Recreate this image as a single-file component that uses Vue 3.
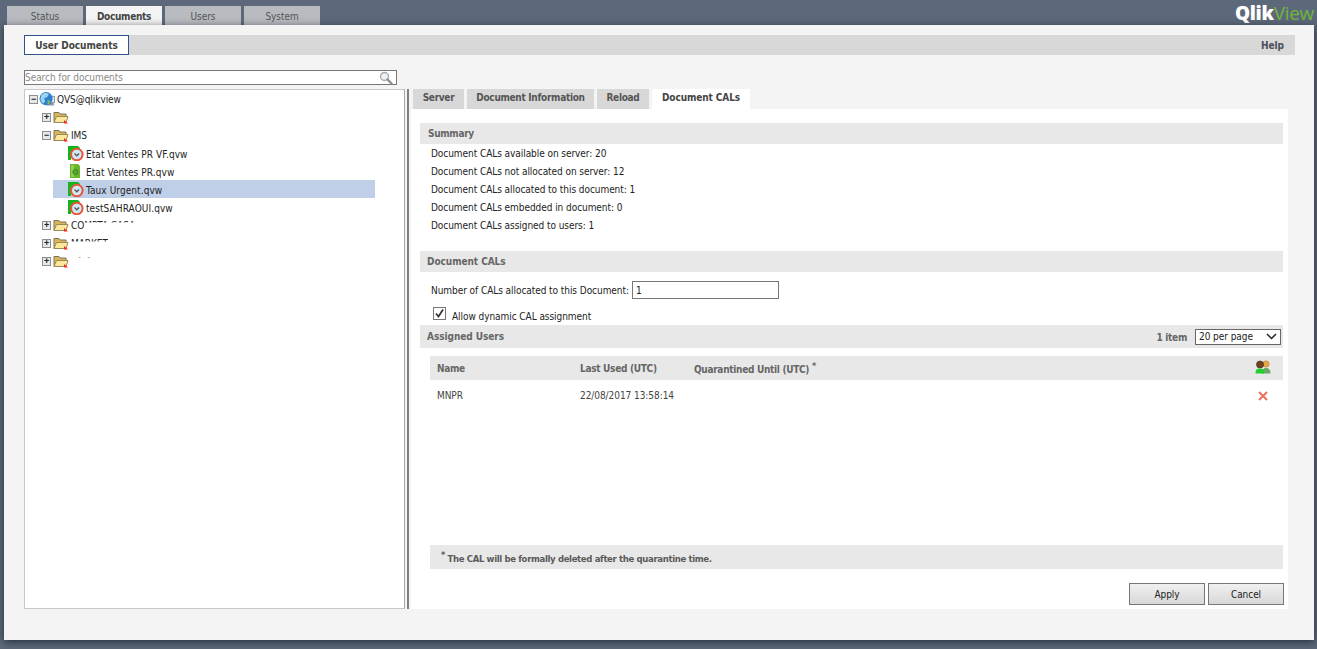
<script setup>
const topTabs = [
  { label: 'Status', active: false },
  { label: 'Documents', active: true },
  { label: 'Users', active: false },
  { label: 'System', active: false }
]
const subTabs = [
  { label: 'Server', w: 51, active: false },
  { label: 'Document Information', w: 127, active: false },
  { label: 'Reload', w: 52, active: false },
  { label: 'Document CALs', w: 98, active: true }
]
const summary = [
  'Document CALs available on server: 20',
  'Document CALs not allocated on server: 12',
  'Document CALs allocated to this document: 1',
  'Document CALs embedded in document: 0',
  'Document CALs assigned to users: 1'
]
const files = [
  { name: 'Etat Ventes PR VF.qvw', clock: true, sel: false },
  { name: 'Etat Ventes PR.qvw', clock: false, sel: false },
  { name: 'Taux Urgent.qvw', clock: true, sel: true },
  { name: 'testSAHRAOUI.qvw', clock: true, sel: false }
]
</script>

<template>
  <div class="page">
    <header class="top">
      <nav class="top-tabs">
        <div v-for="t in topTabs" :key="t.label" class="top-tab" :class="{ on: t.active }">{{ t.label }}</div>
      </nav>
      <div class="logo"><b>Qlik</b><span>View</span></div>
    </header>

    <main class="panel">
      <div class="bar">
        <div class="bar-tab">User Documents</div>
        <div class="help">Help</div>
      </div>

      <div class="search">
        <span>Search for documents</span>
        <svg width="16" height="14" viewBox="0 0 16 14">
          <circle cx="6.500" cy="5.500" r="4" fill="#eef1f3" stroke="#a9adb0" stroke-width="1.400"/>
          <path d="M9.500 8.500l4 4" stroke="#8b8e90" stroke-width="2.400" stroke-linecap="round"/>
        </svg>
      </div>

      <div class="cols">
        <section class="tree">
          <div class="row r0">
            <i class="box">−</i>
            <svg class="globe" width="16" height="17" viewBox="0 0 17 17">
              <path d="M8 11h7l1 4H8z" fill="#8f93a8"/>
              <rect x="9" y="5" width="7.500" height="7" fill="#dfe7f4" stroke="#6f7488" stroke-width=".8"/>
              <circle cx="7.500" cy="7.500" r="7" fill="#2f7fd0"/>
              <path d="M2.500 3.500c3-2.500 6-2.500 8-.5l-2 3-3 1 1 4-2.500 2-2.500-4z" fill="#9ad4ee"/>
              <path d="M9 9l3 1-1 3-2 1z" fill="#7cc25a"/>
            </svg>
            <span>QVS@qlikview</span>
          </div>
          <div class="row r1">
            <i class="box">+</i>
            <svg class="folder" width="16" height="13" viewBox="0 0 16 13"><path d="M1 1.500h5l1 1.500h6v8.500H1z" fill="#dcb45a" stroke="#7d7458"/><path d="M1 11.500l2.500-6H15l-2 6z" fill="#fde79a" stroke="#9a8a5a"/><path d="M11 9l4 3.500h-4z" fill="#ee2a1c"/></svg>
          </div>
          <div class="row r1">
            <i class="box">−</i>
            <svg class="folder" width="16" height="13" viewBox="0 0 16 13"><path d="M1 1.500h5l1 1.500h6v8.500H1z" fill="#dcb45a" stroke="#7d7458"/><path d="M1 11.500l2.500-6H15l-2 6z" fill="#fde79a" stroke="#9a8a5a"/><path d="M11 9l4 3.500h-4z" fill="#ee2a1c"/></svg>
            <span>IMS</span>
          </div>
          <div v-for="f in files" :key="f.name" class="row r2" :class="{ sel: f.sel }">
            <svg class="file" width="16" height="16" viewBox="0 0 16 16">
              <template v-if="f.clock">
                <path d="M0 1h10l2 2v3H3v9H0z" fill="#12b51e"/>
                <circle cx="8.800" cy="9.500" r="5.800" fill="#cfe9f5" stroke="#e8553a" stroke-width="2"/>
                <path d="M6.500 8.500l2.300 2.300 2.300-2.300" fill="none" stroke="#55555c" stroke-width="1.300"/>
              </template>
              <template v-else>
                <path d="M2 1h8l2 2v12H2z" fill="#6cb52f"/>
                <path d="M3 2h3v12H3z" fill="#8fd04a"/>
                <circle cx="7.500" cy="9" r="2.600" fill="#5aa232" stroke="#3f8a24"/>
              </template>
            </svg>
            <span class="fname">{{ f.name }}</span>
          </div>
          <div class="row r1">
            <i class="box">+</i>
            <svg class="folder" width="16" height="13" viewBox="0 0 16 13"><path d="M1 1.500h5l1 1.500h6v8.500H1z" fill="#dcb45a" stroke="#7d7458"/><path d="M1 11.500l2.500-6H15l-2 6z" fill="#fde79a" stroke="#9a8a5a"/><path d="M11 9l4 3.500h-4z" fill="#ee2a1c"/></svg>
            <span>CO<em class="m1">MPTA CASA</em></span>
          </div>
          <div class="row r1">
            <i class="box">+</i>
            <svg class="folder" width="16" height="13" viewBox="0 0 16 13"><path d="M1 1.500h5l1 1.500h6v8.500H1z" fill="#dcb45a" stroke="#7d7458"/><path d="M1 11.500l2.500-6H15l-2 6z" fill="#fde79a" stroke="#9a8a5a"/><path d="M11 9l4 3.500h-4z" fill="#ee2a1c"/></svg>
            <span class="m2">MARKET</span>
          </div>
          <div class="row r1">
            <i class="box">+</i>
            <svg class="folder" width="16" height="13" viewBox="0 0 16 13"><path d="M1 1.500h5l1 1.500h6v8.500H1z" fill="#dcb45a" stroke="#7d7458"/><path d="M1 11.500l2.500-6H15l-2 6z" fill="#fde79a" stroke="#9a8a5a"/><path d="M11 9l4 3.500h-4z" fill="#ee2a1c"/></svg>
            <span class="m3">&nbsp;&nbsp;A A</span>
          </div>
        </section>

        <div class="split"></div>

        <section class="right">
          <nav class="sub-tabs">
            <div v-for="t in subTabs" :key="t.label" class="sub-tab" :class="{ on: t.active }" :style="{ width: t.w + 'px' }">{{ t.label }}</div>
          </nav>
          <div class="content">
            <h3 class="sec summary-h">Summary</h3>
            <p v-for="s in summary" :key="s" class="line">{{ s }}</p>

            <h3 class="sec cals-h">Document CALs</h3>
            <div class="alloc">
              <label>Number of CALs allocated to this Document:</label>
              <div class="input">1</div>
            </div>
            <div class="dyn">
              <span class="check">
                <svg width="11" height="11" viewBox="0 0 11 11"><path d="M2 5.500l2.500 3L9 1.500" fill="none" stroke="#333" stroke-width="1.700"/></svg>
              </span>
              <span>Allow dynamic CAL assignment</span>
            </div>

            <div class="sec assigned">
              <span>Assigned Users</span>
              <div class="pager">
                <b>1 item</b>
                <div class="select">20 per page
                  <svg width="11" height="7" viewBox="0 0 11 7"><path d="M1 1l4.500 4.500L10 1" fill="none" stroke="#222" stroke-width="1.500"/></svg>
                </div>
              </div>
            </div>

            <div class="thead">
              <span class="c1">Name</span>
              <span class="c2">Last Used (UTC)</span>
              <span class="c3">Quarantined Until (UTC) <sup>*</sup></span>
              <svg class="users" width="16" height="15" viewBox="0 0 16 15">
                <circle cx="11" cy="4" r="3.200" fill="#e8a548" stroke="#a87a3a" stroke-width=".5"/>
                <path d="M7 13.500c0-4 1.500-5.500 4-5.500s4.500 1.500 4.500 5.500z" fill="#6aa867"/>
                <circle cx="5" cy="4.500" r="3.500" fill="#7a3e18" stroke="#333" stroke-width=".7"/>
                <path d="M.5 13.500c0-4 1.500-5 4.500-5s4 1 4 5z" fill="#1fd02e"/>
              </svg>
            </div>
            <div class="trow">
              <span class="c1">MNPR</span>
              <span class="c2">22/08/2017 13:58:14</span>
              <svg class="del" width="10" height="10" viewBox="0 0 10 10"><path d="M1 1l8 8M9 1L1 9" stroke="#f0705c" stroke-width="2"/></svg>
            </div>

            <div class="note"><sup>*</sup> The CAL will be formally deleted after the quarantine time.</div>

            <div class="actions">
              <button>Apply</button>
              <button>Cancel</button>
            </div>
          </div>
        </section>
      </div>
    </main>
  </div>
</template>

<style scoped>
.page {
  width: 1317px;
  height: 649px;
  overflow: hidden;
  background: #5d697a;
  font: 10px/13px "DejaVu Sans Condensed", "DejaVu Sans", sans-serif;
  font-stretch: condensed;
  letter-spacing: -.06px;
  color: #111;
  display: flex;
  flex-direction: column;
}
.top {
  height: 25px;
  flex: none;
  display: flex;
  justify-content: space-between;
  padding: 6px 3px 0 7px;
  box-sizing: border-box;
}
.top-tabs { display: flex; gap: 3px; }
.top-tab {
  width: 76px;
  height: 19px;
  background: #b8bcc1;
  color: #555;
  text-align: center;
  line-height: 21px;
}
.top-tab.on { background: #f4f4f4; color: #444; font-weight: 700; letter-spacing: -.3px; }
.logo {
  margin-top: -3px;
  height: 20px;
  font: 700 19px/20px "Open Sans", sans-serif;
  color: #fff;
  letter-spacing: -.3px;
}
.logo b { font-weight: 800; }
.logo span { color: #6fb63a; font-weight: 400; }
.panel {
  margin: 0 3px 0 4px;
  height: 615px;
  flex: none;
  background: #f4f4f4;
  box-shadow: 0 2px 8px rgba(20, 25, 35, .75);
  padding: 10px 0 0 20px;
  box-sizing: border-box;
}
.bar {
  width: 1271px;
  height: 20px;
  background: #d8d8d8;
  display: flex;
  justify-content: space-between;
  align-items: center;
}
.bar-tab {
  width: 103px;
  height: 18px;
  border: 1px solid #35508f;
  background: #fff;
  text-align: center;
  line-height: 20px;
  font-weight: 700;
  color: #444;
}
.help { font-weight: 700; color: #4a4f5a; padding-right: 11px; }
.search {
  margin-top: 15px;
  width: 373px;
  height: 15px;
  box-sizing: border-box;
  border: 1px solid #777;
  background: #fff;
  color: #8a8a8a;
  display: flex;
  justify-content: space-between;
  align-items: center;
  padding: 0 2px 0 0;
}
.cols {
  margin-top: 4px;
  display: flex;
  height: 520px;
}
.tree {
  width: 381px;
  box-sizing: border-box;
  background: #fff;
  border: 1px solid #c8c8cc;
  border-right-color: #a8a6b4;
}
.split {
  width: 2px;
  margin: 0 2px 0 2px;
  background: #808080;
}
.row {
  height: 18px;
  display: flex;
  align-items: center;
  white-space: nowrap;
  color: #222;
}
.r0 { padding-left: 4px; }
.r1 { padding-left: 17px; }
.r2 { margin-left: 28px; width: 322px; padding-left: 15px; box-sizing: border-box; }
.sel { background: #c0cfe8; }
.box {
  width: 9px;
  height: 9px;
  box-sizing: border-box;
  border: 1px solid #8d8d8d;
  background: #e8e8e8;
  font: 700 9px/7px "Liberation Sans", sans-serif;
  text-align: center;
  color: #222;
  flex: none;
  margin-right: 2px;
}
.globe { margin: 0 3px 0 -1px; flex: none; }
.r0 span { margin-left: -1px; }
.folder { flex: none; margin-right: 2px; }
.file { flex: none; margin-right: 2px; }
.fname { padding-top: 2px; letter-spacing: .08px; }
.m1 { font-style: normal; clip-path: inset(0 0 9px 0); display: inline-block; }
.m2 { clip-path: inset(0 0 8px 0); display: inline-block; }
.m3 { clip-path: inset(0 0 10px 0); display: inline-block; }
.right { width: 877px; }
.sub-tabs { display: flex; gap: 3px; height: 20px; padding-left: 2px; }
.sub-tab {
  background: #d8d8d8;
  color: #555;
  font-weight: 700;
  letter-spacing: -.3px;
  text-align: center;
  line-height: 17px;
}
.sub-tab.on { background: #fff; color: #444; letter-spacing: -.1px; }
.content {
  background: #fff;
  height: 500px;
  padding: 14px 5px 0 9px;
  box-sizing: border-box;
}
.sec {
  margin: 0;
  background: #e8e8e8;
  color: #666;
  font-size: 10px;
  font-weight: 700;
}
.summary-h { height: 21px; line-height: 21px; padding-left: 8px; letter-spacing: -.3px; }
.line { margin: 0 0 0 11px; height: 18px; line-height: 20px; color: #222; }
.cals-h { margin-top: 17px; height: 21px; line-height: 21px; padding-left: 7px; }
.alloc { margin: 9px 0 0 11px; display: flex; align-items: center; gap: 3px; height: 18px; color: #222; }
.input {
  width: 147px;
  height: 18px;
  box-sizing: border-box;
  border: 1px solid #777;
  line-height: 17px;
  padding-left: 3px;
}
.dyn { display: flex; align-items: center; margin: 8px 0 0 13px; height: 13px; color: #222; gap: 6px; }
.dyn > span:last-child { padding-top: 6px; }
.check {
  width: 13px;
  height: 13px;
  box-sizing: border-box;
  border: 1px solid #777;
  display: flex;
  align-items: center;
  justify-content: center;
}
.assigned {
  margin-top: 5px;
  height: 23px;
  display: flex;
  justify-content: space-between;
  align-items: center;
  padding: 0 2px 0 7px;
}
.pager { display: flex; align-items: center; gap: 8px; }
.pager b { color: #666; padding-top: 2px; letter-spacing: -.3px; }
.select {
  width: 86px;
  height: 16px;
  box-sizing: border-box;
  border: 1px solid #666;
  background: #fff;
  color: #222;
  font-weight: 400;
  line-height: 14px;
  padding: 0 3px;
  display: flex;
  justify-content: space-between;
  align-items: center;
}
.thead {
  margin: 8px 0 0 10px;
  height: 24px;
  background: #e8e8e8;
  color: #666;
  font-weight: 700;
  letter-spacing: -.3px;
  display: flex;
  align-items: center;
  position: relative;
}
.c1 { width: 150px; padding-left: 7px; box-sizing: border-box; }
.c2 { width: 114px; }
.c3 { padding-top: 3px; }
.c3 sup { font-size: 9px; line-height: 0; }
.users { position: absolute; left: 825px; top: 4px; }
.trow {
  margin-left: 10px;
  height: 31px;
  display: flex;
  align-items: center;
  color: #444;
  position: relative;
}
.del { position: absolute; left: 828px; top: 11px; }
.note {
  margin: 134px 0 0 10px;
  height: 24px;
  background: #e8e8e8;
  color: #5a5a5a;
  font-size: 9.500px;
  font-weight: 700;
  letter-spacing: -.36px;
  line-height: 27px;
  padding-left: 11px;
  box-sizing: border-box;
}
.note sup { font-size: 9px; line-height: 0; }
.actions {
  margin: 14px -1px 0 0;
  display: flex;
  justify-content: flex-end;
  gap: 3px;
}
button {
  width: 76px;
  height: 22px;
  box-sizing: border-box;
  border: 1px solid #777;
  background: linear-gradient(#f0f0f0, #d8d8d8);
  font: inherit;
  letter-spacing: inherit;
  color: #222;
  padding: 0;
}
</style>
